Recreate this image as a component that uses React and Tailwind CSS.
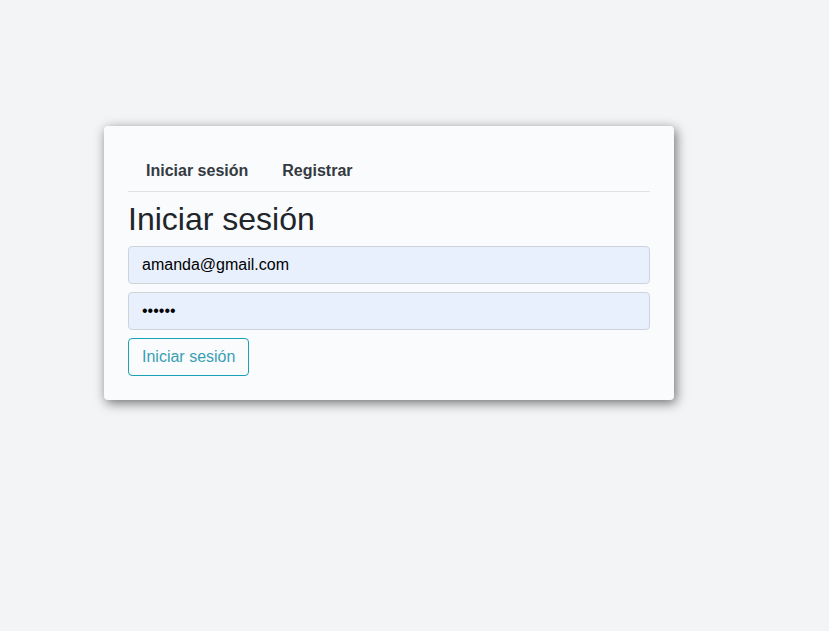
export default function App() {
  return (
    <div
      className="min-h-[631px] bg-[#f3f4f6] pt-[126px] pl-[104px]"
      style={{ fontFamily: '"Liberation Sans", Arial, sans-serif' }}
    >
      <div className="w-[570px] rounded-[4px] bg-[#f9fbfd] p-6 shadow-[2px_3px_12px_rgba(0,0,0,0.55)]">
        {/* Tabs */}
        <nav className="flex border-b border-[#dee2e6] pl-px">
          <a className="-mb-px block border border-transparent px-4 py-2 text-[16px] font-bold leading-6 text-[#343a40]">
            Iniciar sesión
          </a>
          <a className="-mb-px block border border-transparent px-4 py-2 text-[16px] font-bold leading-6 text-[#343a40]">
            Registrar
          </a>
        </nav>

        <h2 className="mt-[8px] mb-[8px] text-[32px] font-normal leading-[1.2] text-[#212529]">
          Iniciar sesión
        </h2>

        <form className="flex flex-col">
          <input
            type="email"
            readOnly
            value="amanda@gmail.com"
            className="mb-2 h-[38px] w-full rounded-[4px] border border-[#ced4da] bg-[#e8f0fe] px-[13px] text-[16px] text-black outline-none"
          />
          <input
            type="password"
            readOnly
            value="123456"
            className="mb-2 h-[38px] w-full rounded-[4px] border border-[#ced4da] bg-[#e8f0fe] px-[13px] text-[16px] text-black outline-none"
          />
          <div>
            <button
              type="button"
              className="h-[38px] rounded-[4px] border border-[#17a2b8] bg-transparent px-[13px] text-[16px] leading-6 text-[#3a9fb3]"
            >
              Iniciar sesión
            </button>
          </div>
        </form>
      </div>
    </div>
  );
}
